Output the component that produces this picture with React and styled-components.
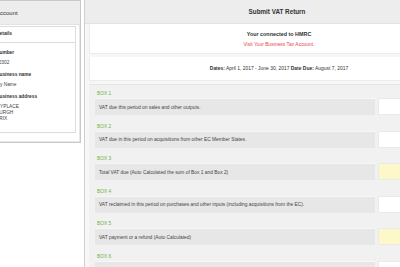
import React from 'react';
import styled, { createGlobalStyle } from 'styled-components';

const GlobalStyle = createGlobalStyle`
    html, body {
        margin: 0;
        padding: 0;
        background: #fff;
        overflow: hidden;
    }
    body {
        width: 400px;
        height: 267px;
        font-family: "Liberation Sans", Arial, sans-serif;
        color: #333;
    }
`;

const Page = styled.div`
    display: flex;
    align-items: flex-start;
    gap: 3px;
    margin-left: -30px;
    width: 500px;
`;

const SidePanel = styled.div`
    flex: 0 0 109px;
    border: 1px solid #c9c9c9;
    box-shadow: inset -1px 0 0 #e6e6e6, inset 0 -1px 0 #e6e6e6;
    background: #fff;
`;

const PanelHeading = styled.div`
    height: 23px;
    display: flex;
    align-items: center;
    justify-content: ${(p) => (p.center ? 'center' : 'flex-start')};
    padding-left: ${(p) => (p.center ? '0' : '25px')};
    background: #ededed;
    border-bottom: 1px solid #e2e2e2;
    font-size: ${(p) => (p.center ? '6.3px' : '6px')};
    font-weight: ${(p) => (p.center ? 'bold' : 'normal')};
    color: #333;
`;

const SideBody = styled.div`
    padding: 1px 4px 9px 0;
`;

const InnerPanel = styled.div`
    border: 1px solid #dcdcdc;
    border-left: none;
`;

const InnerHeading = styled.div`
    height: 16px;
    box-sizing: border-box;
    padding: 4px 0 0 25px;
    line-height: 6px;
    border-bottom: 1px solid #dcdcdc;
    font-size: 4.9px;
    font-weight: bold;
`;

const DetailList = styled.dl`
    margin: 0;
    padding: 7px 0 10px 25px;
    font-size: 4.8px;
    line-height: 6px;
`;

const Term = styled.dt`
    font-weight: bold;
    color: #333;
`;

const Value = styled.dd`
    margin: 4px 0 6px 0;
    color: #444;
    &:last-child {
        margin-bottom: 0;
    }
`;

const MainPanel = styled.div`
    flex: 0 0 384px;
    border-left: 1px solid #cfcfcf;
    box-shadow: inset 1px 0 0 #e8e8e8;
    background: #fff;
`;

const MainBody = styled.div`
    padding: 0 0 0 4px;
    display: flex;
    flex-direction: column;
    gap: 3px;
    background: #f7f7f7;
`;

const Well = styled.div`
    background: #fff;
    border: 1px solid #ececec;
    border-top: none;
    height: ${(p) => p.h}px;
    display: flex;
    flex-direction: column;
    align-items: center;
    justify-content: center;
    gap: 5px;
    font-size: 4.95px;
    color: #333;
`;

const Strong = styled.span`
    font-weight: bold;
    font-size: ${(p) => p.size || 'inherit'};
`;

const Link = styled.a`
    color: #e8454e;
    text-decoration: none;
`;

const BoxList = styled.div`
    background: #f1f1f1;
    padding: 5px 6px 0 6px;
    border-top: 1px solid #e6e6e6;
`;

const BoxItem = styled.div`
    margin-bottom: 7.5px;
`;

const BoxLabel = styled.div`
    font-size: 4.8px;
    line-height: 7px;
    color: #6fb04a;
    padding-left: 2px;
    margin-bottom: 1px;
`;

const BoxRow = styled.div`
    display: flex;
    gap: 3px;
    height: 17px;
`;

const BoxText = styled.div`
    flex: 1;
    display: flex;
    align-items: center;
    padding-left: 4px;
    background: #e7e7e7;
    border-top: 1px solid #f7f7f7;
    font-size: 4.85px;
    color: #444;
    white-space: nowrap;
    overflow: hidden;
`;

const BoxInput = styled.input`
    width: 85px;
    box-sizing: border-box;
    border: 1px solid #eaeaea;
    background: ${(p) => (p.auto ? '#fdf8c9' : '#fff')};
    margin: 0;
    padding: 0;
    font-size: 4.5px;
`;

const boxes = [
    { label: 'BOX 1', text: 'VAT due this period on sales and other outputs.' },
    { label: 'BOX 2', text: 'VAT due in this period on acquisitions from other EC Member States.' },
    { label: 'BOX 3', text: 'Total VAT due (Auto Calculated the sum of Box 1 and Box 2)', auto: true },
    { label: 'BOX 4', text: 'VAT reclaimed in this period on purchases and other inputs (including acquisitions from the EC).' },
    { label: 'BOX 5', text: 'VAT payment or a refund (Auto Calculated)', auto: true },
    { label: 'BOX 6', text: 'Total value of sales and all other outputs excluding VAT (including supplies to EC) Do not include pence.' },
];

function App() {
    return (
        <>
            <GlobalStyle />
            <Page>
                <SidePanel>
                    <PanelHeading>Account</PanelHeading>
                    <SideBody>
                        <InnerPanel>
                            <InnerHeading>Details</InnerHeading>
                            <DetailList>
                                <Term>Number</Term>
                                <Value>12302</Value>
                                <Term>Business name</Term>
                                <Value>My Name</Value>
                                <Term>Business address</Term>
                                <Value>
                                    MYPLACE<br />
                                    BURGH<br />
                                    PRIX
                                </Value>
                            </DetailList>
                        </InnerPanel>
                    </SideBody>
                </SidePanel>
                <MainPanel>
                    <PanelHeading center>Submit VAT Return</PanelHeading>
                    <MainBody>
                        <Well h={29}>
                            <Strong size="5.4px">Your connected to HMRC</Strong>
                            <Link href="#">Visit Your Business Tax Account.</Link>
                        </Well>
                        <Well h={23}>
                            <div>
                                <Strong>Dates:</Strong> April 1, 2017 - June 30, 2017{' '}
                                <Strong>Date Due:</Strong> August 7, 2017
                            </div>
                        </Well>
                        <BoxList>
                            {boxes.map((b) => (
                                <BoxItem key={b.label}>
                                    <BoxLabel>{b.label}</BoxLabel>
                                    <BoxRow>
                                        <BoxText>{b.text}</BoxText>
                                        <BoxInput auto={b.auto} readOnly={b.auto} />
                                    </BoxRow>
                                </BoxItem>
                            ))}
                        </BoxList>
                    </MainBody>
                </MainPanel>
            </Page>
        </>
    );
}

export default App;
